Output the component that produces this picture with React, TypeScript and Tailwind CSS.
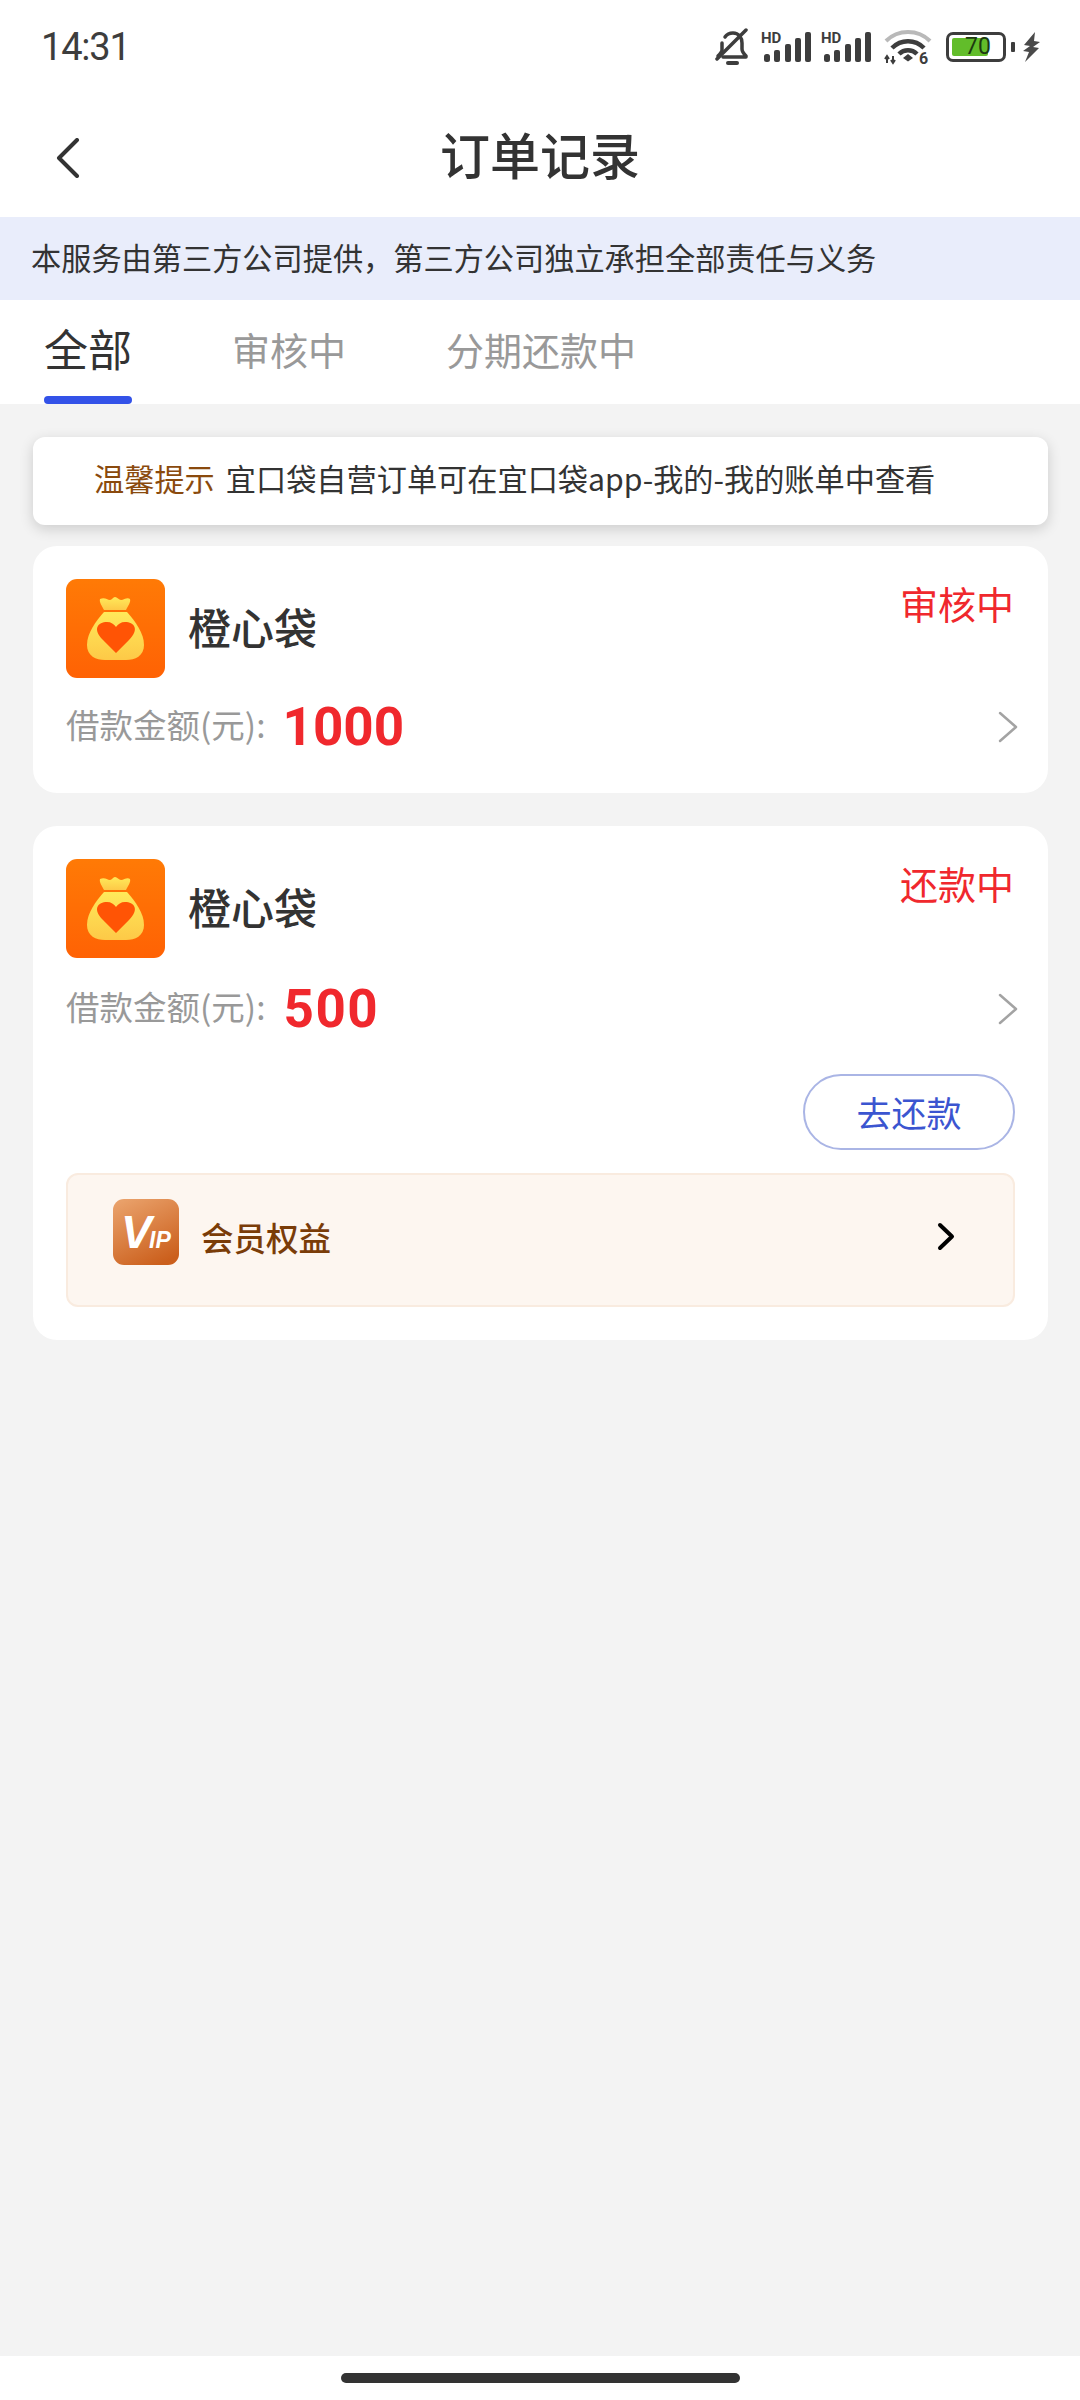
import React from 'react';

const cjk = '[font-family:"Noto_Sans_CJK_SC","Noto_Sans",sans-serif]';

const Signal = () => (
  <svg width="50" height="32" viewBox="0 0 50 32" fill="#3d3d3d" className="overflow-visible">
    <text x="0" y="12" fontSize="15" fontWeight="700" fontFamily="Roboto, sans-serif">HD</text>
    <rect x="3" y="23" width="6" height="8" rx="2.5" />
    <rect x="13" y="19" width="6" height="12" rx="2" />
    <rect x="24" y="13" width="6" height="18" rx="2" />
    <rect x="34" y="7" width="6" height="24" rx="2" />
    <rect x="44" y="1" width="6" height="30" rx="2" />
  </svg>
);

const BellOff = () => (
  <svg width="34" height="38" viewBox="0 0 34 38" fill="none" stroke="#3d3d3d" strokeWidth="3.5" strokeLinecap="round" strokeLinejoin="round">
    <path d="M10 9c2-3 5-4 8-4 6 0 9 5 9 10v6c0 3 2 5 4 7v1H8" />
    <path d="M7 15v7c0 2-2 4-4 6" />
    <path d="M2 31 31 2" />
    <path d="M13 35h9" strokeWidth="4" />
  </svg>
);

const Wifi = () => (
  <svg width="48" height="40" viewBox="0 0 48 40" fill="none" className="mt-[4px]">
    <path d="M2 12C14 0 34 0 46 12" stroke="#b9b9b9" strokeWidth="4" />
    <path d="M8 19C17 10 31 10 40 19" stroke="#3d3d3d" strokeWidth="4.5" />
    <path d="M15 25c5-5 13-5 18 0" stroke="#3d3d3d" strokeWidth="4.5" />
    <path d="M19 29l5-4 5 4-5 3.5z" fill="#3d3d3d" />
    <path d="M3 27v7M1 30l2-3 2 3M9 34v-7M7 31l2 3 2-3" stroke="#3d3d3d" strokeWidth="2" />
    <text x="35" y="35" fontSize="16" fontWeight="700" fill="#3d3d3d" fontFamily="Roboto, sans-serif">6</text>
  </svg>
);

const Battery = () => (
  <div className="flex items-center gap-[5px]">
    <div className="relative flex h-[30px] w-[60px] items-center rounded-[7px] border-[3px] border-[#3d3d3d] p-[3px]">
      <div className="h-full w-[36px] rounded-[2px] bg-[#62bd2a]" />
      <span className="absolute left-[16px] top-[-3px] font-['Roboto'] text-[23px] leading-[30px] text-[#1d3a10]">70</span>
    </div>
    <div className="h-[10px] w-[4px] rounded-[1px] bg-[#3d3d3d]" />
  </div>
);

const Bolt = () => (
  <svg width="17" height="30" viewBox="0 0 17 30" fill="#4a4a4a">
    <path d="M12 0 1 13l6 1-7 5 6 1-4 10 14-14-6-1 7-5-6-1z" />
  </svg>
);

const BagIcon = ({ id }: { id: string }) => (
  <svg width="99" height="99" viewBox="0 0 99 99" className="shrink-0">
    <defs>
      <linearGradient id={`bg${id}`} x1="0" y1="0" x2="0" y2="1">
        <stop offset="0" stopColor="#ff7a06" />
        <stop offset="1" stopColor="#ff6204" />
      </linearGradient>
      <linearGradient id={`bag${id}`} x1="0" y1="0" x2="0" y2="1">
        <stop offset="0" stopColor="#ffe95a" />
        <stop offset="1" stopColor="#fdc947" />
      </linearGradient>
    </defs>
    <rect width="99" height="99" rx="11" fill={`url(#bg${id})`} />
    <path d="M34 20c5-2 7 1 10 1 2 0 3-3 5-3s4 3 6 3c3 0 6-3 9-1 1 3-2 7-4 11H38c-2-4-5-8-4-11z" fill={`url(#bag${id})`} />
    <path d="M38 33h23c8 9 17 21 17 33 0 11-9 15-18 15H39c-9 0-18-4-18-15 0-12 9-24 17-33z" fill={`url(#bag${id})`} />
    <path d="M50 74 37 61C26 50 32 43 41 43c4 0 7 2 9 5 2-3 5-5 9-5 9 0 15 7 4 18z" fill="#ff5405" />
  </svg>
);

const VipIcon = () => (
  <svg width="66" height="66" viewBox="0 0 66 66" className="mb-[16px] shrink-0">
    <defs>
      <linearGradient id="vip" x1="0.2" y1="0" x2="0.7" y2="1">
        <stop offset="0" stopColor="#e9a069" />
        <stop offset="1" stopColor="#cb5f1c" />
      </linearGradient>
    </defs>
    <rect width="66" height="66" rx="11" fill="url(#vip)" />
    <text x="8" y="49" fontSize="46" fontWeight="700" fontStyle="italic" fill="#fff" fontFamily="Liberation Sans, sans-serif">V</text>
    <text x="36" y="49" fontSize="23" fontWeight="700" fontStyle="italic" fill="#fff" fontFamily="Liberation Sans, sans-serif">IP</text>
  </svg>
);

const Chevron = () => (
  <svg width="20" height="32" viewBox="0 0 20 32" fill="none" stroke="#a3a3a3" strokeWidth="2.5" strokeLinecap="round" strokeLinejoin="round" className="mr-[-3px]">
    <path d="M2 2l16 14L2 30" />
  </svg>
);

const OrderTop = ({ id, status, amount, rowGap, amountClass }: { id: string; status: string; amount: string; rowGap: string; amountClass: string }) => (
  <>
    <div className="flex items-start justify-between">
      <div className="flex items-center gap-[23px]">
        <BagIcon id={id} />
        <span className="mb-[6px] text-[43px] font-medium leading-[60px] text-[#333]">橙心袋</span>
      </div>
      <span className="mr-[1px] mt-[-3px] text-[38px] leading-[54px] text-[#f0282d]">{status}</span>
    </div>
    <div className={`${rowGap} flex h-[76px] items-center justify-between`}>
      <div className="flex items-center gap-[17px]">
        <span className="mb-[6px] text-[33.5px] text-[#999]">借款金额(元):</span>
        <span className={`${amountClass} font-['Roboto'] text-[53px] font-bold leading-[76px] text-[#f0282d]`}>{amount}</span>
      </div>
      <Chevron />
    </div>
  </>
);

export default function App() {
  return (
    <div className={`flex h-[2400px] w-[1080px] flex-col overflow-hidden bg-[#f3f3f3] ${cjk}`}>
      <div className="flex h-[94px] items-center justify-between bg-white pl-[41px] pr-[40px]">
        <span className="font-['Roboto'] text-[38px] font-normal tracking-[-1.2px] text-[#3d3d3d]">14:31</span>
        <div className="flex items-center">
          <BellOff />
          <div className="ml-[12px] flex gap-[10px]">
            <Signal />
            <Signal />
          </div>
          <div className="ml-[13px]"><Wifi /></div>
          <div className="ml-[14px]"><Battery /></div>
          <div className="ml-[8px]"><Bolt /></div>
        </div>
      </div>

      <div className="relative flex h-[123px] items-center justify-center bg-white pb-[5px]">
        <svg width="26" height="40" viewBox="0 0 26 40" fill="none" stroke="#333" strokeWidth="4" strokeLinecap="round" strokeLinejoin="round" className="absolute left-[55px] top-[44px]">
          <path d="M22 2 4 20l18 18" />
        </svg>
        <h1 className="text-[50px] font-medium text-[#333]">订单记录</h1>
      </div>

      <div className="flex h-[83px] items-center bg-[#e9edfb] px-[31px] pb-[2px] text-[30.2px] text-[#333]">
        本服务由第三方公司提供，第三方公司独立承担全部责任与义务
      </div>

      <div className="flex h-[104px] bg-white pl-[44px]">
        <div className="relative flex h-full w-[88px] items-center justify-center pb-[8px]">
          <span className="text-[44px] text-[#333]">全部</span>
          <div className="absolute bottom-0 left-0 h-[8px] w-[88px] rounded-[4px] bg-[#3352e8]" />
        </div>
        <span className="mb-[8px] ml-[100px] self-center text-[38px] text-[#999]">审核中</span>
        <span className="mb-[8px] ml-[100px] self-center text-[38px] text-[#999]">分期还款中</span>
      </div>

      <div className="flex flex-1 flex-col pl-[33px] pr-[32px] pt-[33px]">
        <div className="flex h-[88px] items-center gap-[11px] rounded-[12px] bg-white pb-[4px] pl-[61px] text-[30.2px] shadow-[0_4px_14px_rgba(0,0,0,0.16)]">
          <span className="text-[#8a4a0d]">温馨提示</span>
          <span className="text-[#333]">宜口袋自营订单可在宜口袋app-我的-我的账单中查看</span>
        </div>

        <div className="mt-[21px] h-[247px] rounded-[24px] bg-white px-[33px] pt-[33px]">
          <OrderTop id="a" status="审核中" amount="1000" rowGap="mt-[11px]" amountClass="" />
        </div>

        <div className="mt-[33px] h-[514px] rounded-[24px] bg-white px-[33px] pt-[33px]">
          <OrderTop id="b" status="还款中" amount="500" rowGap="mt-[13px]" amountClass="ml-[1px] tracking-[1.5px]" />
          <div className="mt-[27px] flex justify-end">
            <button className="h-[76px] w-[212px] rounded-full border-2 border-[#aab5e5] text-[35px] text-[#3b55d0]">去还款</button>
          </div>
          <div className="mt-[23px] flex h-[134px] items-center rounded-[12px] border-2 border-[#f9ebdf] bg-[#fdf6f0] pl-[45px] pr-[57px]">
            <VipIcon />
            <span className="mb-[6px] ml-[22px] text-[32.5px] font-medium text-[#7a3c08]">会员权益</span>
            <svg width="19" height="29" viewBox="0 0 19 29" fill="none" stroke="#000" strokeWidth="4" strokeLinecap="round" strokeLinejoin="round" className="mb-[8px] ml-auto">
              <path d="M3 3l12 11.5L3 26" />
            </svg>
          </div>
        </div>
      </div>

      <div className="flex h-[44px] justify-center bg-white pt-[17px]">
        <div className="h-[10px] w-[399px] rounded-full bg-[#333]" />
      </div>
    </div>
  );
}
